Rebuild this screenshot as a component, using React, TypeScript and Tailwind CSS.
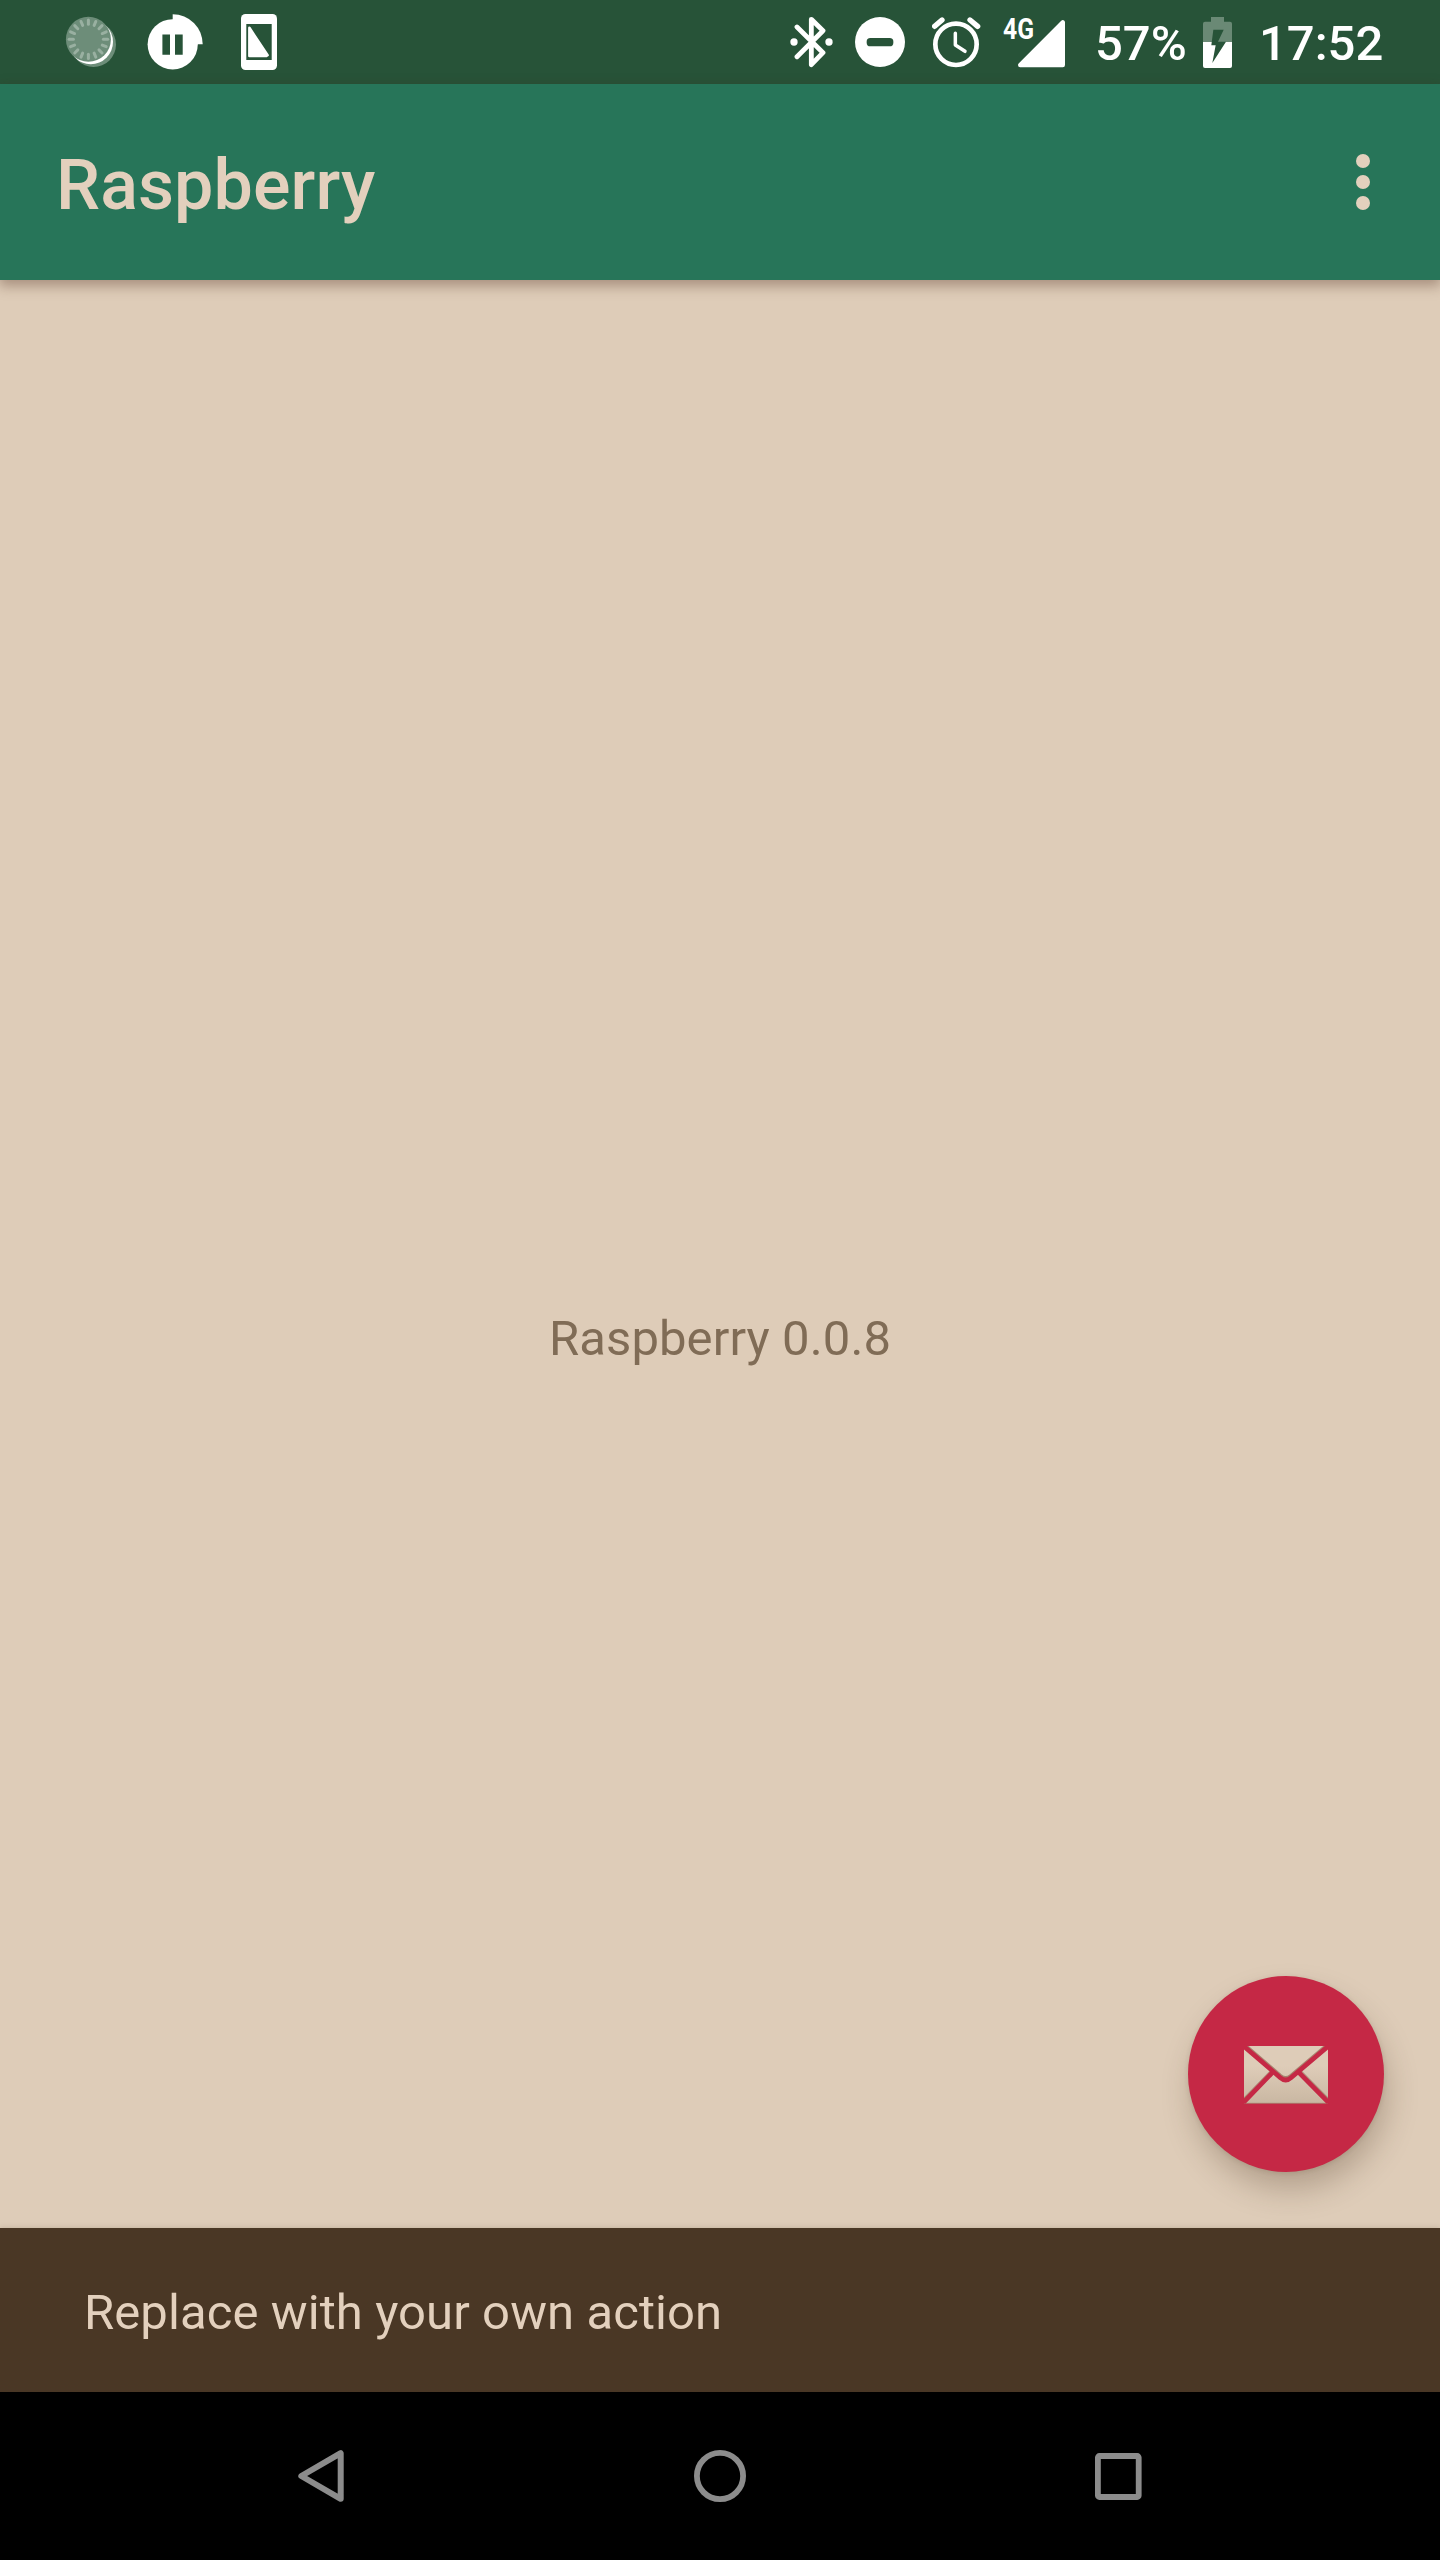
import React from "react";

const RAYS = Array.from({ length: 16 }, (_, i) => i * 22.5);

function SyncDialIcon() {
  return (
    <svg className="h-[52px] w-[52px] shrink-0" viewBox="65 16 52 52">
      <circle cx="93.5" cy="44.5" r="22.5" fill="#6d8d79" />
      <circle cx="90.8" cy="42" r="22.2" fill="#fff" />
      <circle cx="88.4" cy="39.3" r="22.5" fill="#6d8d79" />
      <g stroke="#99b0a1" strokeWidth="3" strokeLinecap="round">
        {RAYS.map((a) => (
          <line key={a} x1="88.4" y1="20" x2="88.4" y2="24.3" transform={`rotate(${a} 88.4 39.3)`} />
        ))}
      </g>
    </svg>
  );
}

function PauseBadgeIcon() {
  return (
    <svg className="ml-[30px] h-[56px] w-[56px] shrink-0" viewBox="147 14 56 56">
      <circle cx="172.7" cy="44.3" r="25.1" fill="#fff" />
      <path d="M172.7 44.3V14.3A30 30 0 0 1 202.7 44.3Z" fill="#fff" />
      <path d="M162.4 34.4h7.6v20.3h-7.6zM175 34.4h7.7v20.3H175z" fill="#275338" />
    </svg>
  );
}

function PhoneIcon() {
  return (
    <svg className="ml-[38px] h-[56px] w-[36px] shrink-0" viewBox="0 0 36 56">
      <rect width="36" height="56" rx="4.5" fill="#fff" />
      <rect x="5.3" y="10" width="25.4" height="36" fill="#275338" />
      <path d="M8.4 13.8L26.6 41.2L25.4 41.9H8.4Z" fill="#fff" stroke="#fff" strokeWidth="2.6" strokeLinejoin="round" />
    </svg>
  );
}

function BluetoothIcon() {
  return (
    <svg className="h-[52px] w-[43px] shrink-0" viewBox="61 48 129 156">
      <path
        d="M82 81L160 158L125 194V58L160 92L82 170"
        fill="none"
        stroke="#fff"
        strokeWidth="14.5"
        strokeLinecap="round"
        strokeLinejoin="round"
      />
      <circle cx="73" cy="126" r="11" fill="#fff" />
      <circle cx="178" cy="126" r="11" fill="#fff" />
    </svg>
  );
}

function DoNotDisturbIcon() {
  return (
    <svg className="ml-[22px] h-[50px] w-[50px] shrink-0" viewBox="0 0 150 150">
      <circle cx="75" cy="75" r="75" fill="#fff" />
      <rect x="35" y="63" width="80" height="25" rx="11" fill="#275338" />
    </svg>
  );
}

function AlarmIcon() {
  return (
    <svg className="ml-[27px] h-[52px] w-[49px] shrink-0" viewBox="486 48 147 156" fill="none" stroke="#fff">
      <circle cx="558" cy="133" r="62" strokeWidth="14" />
      <path d="M556 100V135L585 154" strokeWidth="10.5" strokeLinecap="round" strokeLinejoin="round" />
      <path d="M494 79L516 60M600 60L623 79" strokeWidth="16" strokeLinecap="round" />
    </svg>
  );
}

function SignalIcon() {
  return (
    <svg className="ml-[20px] h-[64px] w-[65px] shrink-0" viewBox="-2 -6 65 64">
      <path
        d="M59.8 6.4V49H17.2Z"
        fill="#fff"
        stroke="#fff"
        strokeWidth="4.4"
        strokeLinejoin="round"
      />
      <text
        x="0"
        y="23.2"
        textLength="31"
        lengthAdjust="spacingAndGlyphs"
        fill="#fff"
        fontFamily="Roboto, sans-serif"
        fontWeight="700"
        fontSize="29"
      >
        4G
      </text>
    </svg>
  );
}

function BatteryIcon() {
  return (
    <svg className="h-[51px] w-[29px] shrink-0" viewBox="369 48 87 153">
      <path d="M393 48H432V62H450Q456 62 456 68V123H369V68Q369 62 375 62H393Z" fill="#6a8975" />
      <path d="M369 123H456V195Q456 201 450 201H375Q369 201 369 195Z" fill="#fff" />
      <path d="M400 86H431L414 122H438L397 186L407 133H394Z" fill="#275338" />
    </svg>
  );
}

function StatusBar() {
  return (
    <header className="flex h-[84px] shrink-0 items-center bg-[#275338] pr-[54px] pl-[65px] text-[49px] font-medium text-white">
      <SyncDialIcon />
      <PauseBadgeIcon />
      <PhoneIcon />
      <div className="ml-auto flex items-center">
        <BluetoothIcon />
        <DoNotDisturbIcon />
        <AlarmIcon />
        <SignalIcon />
        <span className="ml-[29px] w-[92px] pt-[3px] leading-none">57%</span>
        <span className="ml-[16px] flex">
          <BatteryIcon />
        </span>
        <span className="ml-[27px] w-[127px] pt-[3px] leading-none">17:52</span>
      </div>
    </header>
  );
}

function AppBar() {
  return (
    <div className="z-10 flex h-[196px] shrink-0 items-center justify-between bg-[#277559] pr-[70px] pl-[56px] shadow-[0_5px_12px_1px_rgba(70,35,20,0.35)]">
      <h1 className="pt-[5px] text-[70px] leading-none font-medium tracking-[0.1px] text-[#e3d0bd]">Raspberry</h1>
      <button aria-label="More options" className="flex flex-col gap-[7px]">
        <span className="size-[14px] rounded-full bg-[#e3d0bd]" />
        <span className="size-[14px] rounded-full bg-[#e3d0bd]" />
        <span className="size-[14px] rounded-full bg-[#e3d0bd]" />
      </button>
    </div>
  );
}

function EnvelopeIcon() {
  return (
    <svg className="h-[60px] w-[84px]" viewBox="252 282 252 180">
      <defs>
        <linearGradient id="paper" x1="0" y1="0" x2="0" y2="1">
          <stop offset="0.35" stopColor="#deccb8" />
          <stop offset="1" stopColor="#c9b7a2" />
        </linearGradient>
        <clipPath id="envelope">
          <path d="M252 288H504V461H252Z" />
        </clipPath>
      </defs>
      <g clipPath="url(#envelope)">
        <rect x="252" y="288" width="252" height="173" fill="url(#paper)" />
        <path d="M246 280L361 379Q377 392 393 379L510 280" fill="none" stroke="#86543f" strokeOpacity=".6" strokeWidth="14" />
        <path d="M335 366L248 456M419 366L508 456" fill="none" stroke="#86543f" strokeOpacity=".5" strokeWidth="14" />
        <path d="M252 460H504" stroke="#86543f" strokeOpacity=".5" strokeWidth="3" />
        <path d="M246 284L361 383Q377 397 393 383L510 284" fill="none" stroke="#c52845" strokeWidth="14" />
        <path d="M337 368L250 458M417 368L506 458" fill="none" stroke="#c52845" strokeWidth="14" />
      </g>
    </svg>
  );
}

function Snackbar() {
  return (
    <div className="absolute inset-x-0 bottom-0 flex h-[164px] items-center bg-[#4a3725] px-[84px] shadow-[0_1px_6px_rgba(60,40,20,0.25)]">
      <p className="pt-[4px] text-[49px] leading-[57px] tracking-[0.09px] text-[#e3d0bd]">Replace with your own action</p>
    </div>
  );
}

function Content() {
  return (
    <main className="relative flex flex-1 items-center justify-center">
      <p className="pt-[4px] text-[49px] leading-[57px] tracking-[0.1px] text-[#806c56]">Raspberry 0.0.8</p>
      <button
        aria-label="Send mail"
        className="absolute right-[56px] bottom-[220px] flex size-[196px] items-center justify-center rounded-full bg-[#c52845] shadow-[4px_18px_32px_-2px_rgba(60,40,20,0.28),0_1px_5px_rgba(60,40,20,0.12)]"
      >
        <EnvelopeIcon />
      </button>
      <Snackbar />
    </main>
  );
}

function NavigationBar() {
  return (
    <nav className="z-20 flex h-[168px] shrink-0 items-center justify-between bg-black px-[298px]">
      <svg className="h-[52px] w-[47px]" viewBox="0 0 47 52">
        <path d="M42.7 3.2V48.8L3.3 26Z" fill="none" stroke="#8c8c8c" strokeWidth="6" strokeLinejoin="round" />
      </svg>
      <svg className="h-[52px] w-[52px]" viewBox="0 0 52 52">
        <circle cx="26" cy="26" r="23.1" fill="none" stroke="#8c8c8c" strokeWidth="5.8" />
      </svg>
      <svg className="h-[47px] w-[47px]" viewBox="0 0 47 47">
        <rect x="2.9" y="3" width="40.8" height="41" rx="1.5" fill="none" stroke="#8c8c8c" strokeWidth="5.8" />
      </svg>
    </nav>
  );
}

export default function App() {
  return (
    <div className="flex h-[2560px] w-[1440px] flex-col overflow-hidden bg-[#deccb8] font-['Roboto',sans-serif]">
      <StatusBar />
      <AppBar />
      <Content />
      <NavigationBar />
    </div>
  );
}
